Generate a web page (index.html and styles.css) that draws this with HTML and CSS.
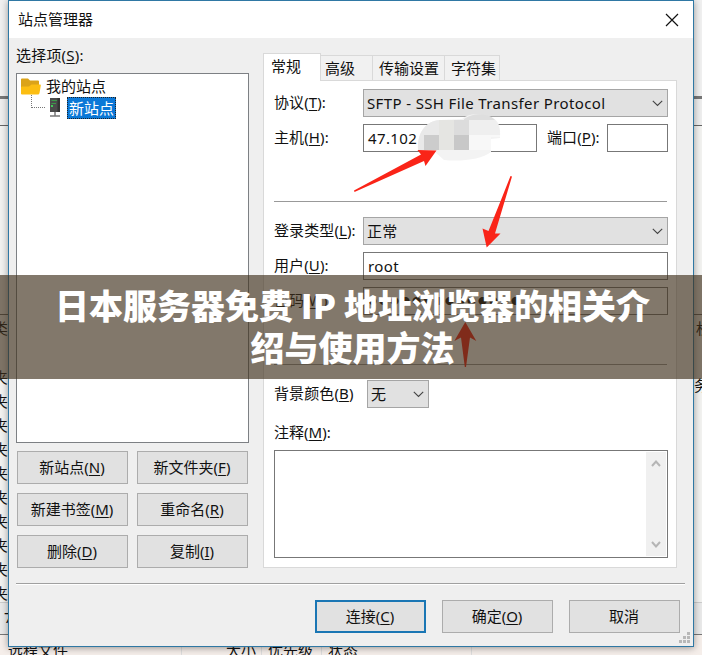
FILE: index.html
```html
<!DOCTYPE html>
<html lang="zh-CN">
<head>
<meta charset="utf-8">
<title>站点管理器</title>
<link rel="stylesheet" href="styles.css">
</head>
<body>
<div class="screen">
  <div class="backdrop">
    <div class="toolbar-edge"></div>
    <div class="address-row"></div>
    <div class="tree-pane"></div>
    <div class="list-head"><span class="clip-left">类</span><span class="clip-right">权</span></div>
    <div class="list-body">
      <div class="list-col"><span>夹</span><span>夹</span><span>夹</span><span>夹</span><span>夹</span><span>夹</span><span>夹</span><span>夹</span><span>夹</span><span>夹</span></div>
      <span class="owner">务</span>
    </div>
    <div class="status-row"><span>7</span></div>
    <div class="queue-head">
      <span class="q-file">远程文件</span><span class="q-size">大小</span><span class="q-prio">优先级</span><span class="q-state">状态</span>
    </div>
  </div>

  <div class="dialog">
    <div class="titlebar">
      <span>站点管理器</span>
      <svg class="close" width="14" height="14" viewBox="0 0 14 14"><path d="M1 1 13 13M13 1 1 13"/></svg>
    </div>
    <div class="content">
      <div class="left">
        <div class="select-label">选择项(<u>S</u>):</div>
        <div class="tree">
          <div class="tree-root">
            <svg width="20" height="17" viewBox="0 0 20 17"><path fill="#dba319" d="M0 1.500Q0 .5 1 .5H7L9 2.500H17Q18 2.500 18 3.500V16H1Q0 16 0 15Z"/><path fill="#fcbe12" d="M0 15.500V9.500Q0 8.500 1 8.500H8L10.500 6.500H19Q20 6.500 19.800 7.500L18.500 15Q18.200 16.500 17 16.500H1Q0 16.500 0 15.500Z"/></svg>
            <span>我的站点</span>
          </div>
          <div class="tree-child">
            <span class="branch"></span>
            <svg width="12" height="20" viewBox="0 0 12 20"><path fill="#4b4b4b" d="M1 0H11V14H1Z"/><path fill="#333" d="M8.500 0H11V14H8.500Z"/><path stroke="#3c9a4a" d="M2.500 2.500H8M2.500 5.500H7"/><path fill="#43c95a" d="M2 7H4V9H2Z"/><path stroke="#777" stroke-width="1.500" d="M6 14V18M1 18H11"/></svg>
            <span class="selected">新站点</span>
          </div>
        </div>
        <div class="site-buttons">
          <button>新站点(<u>N</u>)</button><button>新文件夹(<u>F</u>)</button>
          <button>新建书签(<u>M</u>)</button><button>重命名(<u>R</u>)</button>
          <button>删除(<u>D</u>)</button><button>复制(<u>I</u>)</button>
        </div>
      </div>
      <div class="right">
        <div class="tabs"><span class="tab active">常规</span><span class="tab t2">高级</span><span class="tab t3">传输设置</span><span class="tab t4">字符集</span></div>
        <div class="panel">
          <div class="row"><label>协议(<u>T</u>):</label><div class="field combo"><span class="protocol">SFTP - SSH File Transfer Protocol</span><svg class="chev" width="11" height="7" viewBox="0 0 11 7"><path d="M.8.800 5.500 5.500 10.200.800"/></svg></div></div>
          <div class="row"><label>主机(<u>H</u>):</label><div class="field host">47.102</div><label class="port-label">端口(<u>P</u>):</label><div class="field port"></div></div>
          <div class="rule"></div>
          <div class="row"><label>登录类型(<u>L</u>):</label><div class="field combo"><span>正常</span><svg class="chev" width="11" height="7" viewBox="0 0 11 7"><path d="M.8.800 5.500 5.500 10.200.800"/></svg></div></div>
          <div class="row"><label>用户(<u>U</u>):</label><div class="field user">root</div></div>
          <div class="row"><label>密码(<u>W</u>):</label><div class="field password">●●●●●●●●●●●●●●</div></div>
          <div class="rule"></div>
          <div class="row colour"><label>背景颜色(<u>B</u>)</label><div class="field combo small"><span>无</span><svg class="chev" width="11" height="7" viewBox="0 0 11 7"><path d="M.8.800 5.500 5.500 10.200.800"/></svg></div></div>
          <div class="comment-label">注释(<u>M</u>):</div>
          <div class="comment"><div class="scroll">
            <svg width="10" height="7" viewBox="0 0 10 7"><path d="M1 6 5 1.500 9 6"/></svg>
            <svg width="10" height="7" viewBox="0 0 10 7"><path d="M1 1 5 5.500 9 1"/></svg>
          </div></div>
        </div>
      </div>
    </div>
    <div class="divider"></div>
    <div class="actions"><button class="default">连接(<u>C</u>)</button><button>确定(<u>O</u>)</button><button>取消</button></div>
    <svg class="grip" width="12" height="12" viewBox="0 0 12 12"><path fill="#b8b8b8" d="M8 0h3v3H8ZM4 4h3v3H4ZM8 4h3v3H8ZM0 8h3v3H0ZM4 8h3v3H4ZM8 8h3v3H8Z"/></svg>
  </div>

  <svg class="marks" width="702" height="655" viewBox="0 0 702 655">
    <path fill="#f3f3f3" d="M418 150C417 132 426 121 440 120L462 119C468 113 480 113 490 117C498 119 501 126 500 138L491 139V152C482 159 462 162 444 160L434 151Z"/>
    <path fill="#e9e9e9" d="M418 150C417 132 426 121 440 120V150Z"/>
    <path fill="#dedede" d="M464 119C473 112 489 113 495 120H464Z"/>
    <path fill="#efefef" d="M469 120H495Q500 125 500 135H469Z"/>
    <path fill="#f8f8f8" d="M469 135H500V137H491V150H469Z"/>
    <path fill="#ccc" d="M424 135h15v15H424Z"/><path fill="#e5e5e2" d="M439 120h15v30H439Z"/><path fill="#dcdcdc" d="M454 120h15v15H454Z"/><path fill="#c8c8c8" d="M454 135h15v15H454Z"/>
    <g fill="#fa2418"><path d="M354 190.500 421 154.500 417.500 150 436.500 150.500 425.500 166 424 161 354.500 192Z"/><path d="M510.500 176 512 176.500 505 200 495 233.500 500.500 233.500 486.700 247.500 482.500 228.500 488.500 231 501 200Z"/><path d="M465.300 322 476.300 341 470 337.500 466 367H464.800L461 337.500 454.300 341Z"/></g>
  </svg>

  <div class="banner">日本服务器免费 IP 地址浏览器的相关介绍与使用方法</div>
</div>
</body>
</html>
```
FILE: styles.css
```css
* { box-sizing: border-box; }
body { margin: 0; font: 15px/20px "Noto Sans", "Noto Sans CJK SC", sans-serif; color: #111; }
u { text-underline-offset: 2px; text-decoration-thickness: 1px; }
svg { display: block; flex: none; }
.screen { position: relative; width: 702px; height: 655px; overflow: hidden; }

.backdrop { height: 655px; display: flex; flex-direction: column; background: #f2f2f0; overflow: hidden; }
.backdrop > div { flex: none; }
.toolbar-edge { height: 99px; background: #f0f0f0; border-bottom: 3px solid #777; }
.address-row { height: 27px; border-bottom: 1px solid #666; background: #eee; }
.tree-pane { height: 189px; border-bottom: 1px solid #666; }
.list-head { height: 52px; padding-top: 3px; display: flex; justify-content: space-between; }
.clip-left { margin-left: -7px; }
.clip-right { margin-right: -9px; }
.list-body { height: 235px; display: flex; justify-content: space-between; overflow: hidden; }
.list-col { display: flex; flex-direction: column; margin-left: -7px; margin-top: -2px; }
.list-col span { height: 24px; line-height: 24px; }
.owner { margin: 8px -7px 0 0; }
.status-row { height: 33px; padding: 4px 0 0 4px; background: #e9e9e9; border-top: 1px solid #ccc; border-bottom: 1px solid #777; }
.queue-head { height: 30px; padding-top: 5px; display: flex; background: #f5eeea; }
.queue-head span { border-right: 1px solid #ddd; height: 20px; flex: none; }
.q-file { width: 182px; padding-left: 8px; }
.q-size { width: 80px; padding-left: 44px; }
.q-prio { width: 60px; padding-left: 6px; }
.q-state { width: 150px; padding-left: 6px; }

.dialog { position: absolute; left: 8px; top: 0; width: 686px; height: 647px; border: 1px solid #2f78a4; background: #efefef; box-shadow: 0 1px 7px rgba(0,0,0,.38); }
.titlebar { height: 37px; background: #fff; display: flex; justify-content: space-between; align-items: center; padding: 0 14px 0 9px; }
.titlebar span { padding-bottom: 2px; }
.close path { fill: none; stroke: #111; stroke-width: 1.2; }
.content { display: flex; height: 545px; padding-left: 7px; }
.left { width: 233px; padding-top: 7px; }
.select-label { height: 28px; letter-spacing: .2px; }
.tree { height: 370px; border: 1px solid #7d8084; background: #fff; padding: 3px 4px; }
.tree-root { display: flex; height: 19px; align-items: center; gap: 5px; }
.tree-root span { padding-bottom: 2px; }
.tree-child { display: flex; align-items: center; padding-left: 10px; height: 23px; }
.branch { width: 14px; height: 13px; border-left: 1px dotted #777; border-bottom: 1px dotted #777; margin: -12px 4px 0 0; }
.selected { margin-left: 6px; width: 49px; height: 22px; line-height: 20px; padding: 0 1px; border: 1px dotted #222; background: #0b78d7; color: #fff; }
button { font: inherit; color: #111; background: #e1e1e1; border: 1px solid #acacac; padding: 0 1px 2px 0; height: 33px; width: 111px; }
.site-buttons { display: grid; grid-template-columns: 111px 111px; gap: 9px; padding: 8px 0 0 1px; }
.right { margin-left: 14px; width: 414px; padding-top: 15px; }
.tabs { display: flex; height: 27px; align-items: flex-end; }
.tab { height: 25px; line-height: 25px; border: 1px solid #d9d9d9; border-left: 0; border-bottom: 0; background: #f1f1f1; }
.tab.active { height: 28px; width: 58px; padding-left: 7px; line-height: 24px; background: #fff; border-left: 1px solid #d9d9d9; margin-bottom: -1px; position: relative; }
.t2 { width: 52px; padding-left: 4px; }
.t3 { width: 72px; padding-left: 6px; }
.t4 { width: 55px; padding-left: 6px; }
.panel { height: 488px; background: #fff; border: 1px solid #d9d9d9; padding: 8px 8px 0 10px; }
.row { display: flex; height: 28px; margin-bottom: 7px; align-items: center; }
.row label { width: 89px; white-space: nowrap; padding-bottom: 2px; letter-spacing: .1px; }
.field { height: 28px; flex: 1; border: 1px solid #777; padding: 0 4px; line-height: 26px; background: #fff; letter-spacing: .37px; }
.combo { display: flex; justify-content: space-between; align-items: center; background: #e1e1e1; border-color: #a5a5a5; padding: 0 4px 0 3px; }
.chev path { fill: none; stroke: #444; stroke-width: 1.1; }
.field.host { flex: none; width: 174px; }
.row .port-label { width: 60px; margin-left: 10px; }
.field.port { flex: none; width: 61px; }
.rule { height: 1px; margin: 49px 1px 15px 0; background: #999; }
.field.password { font-size: 9px; letter-spacing: 2px; }
.row.colour label { width: 93px; }
.field.small { flex: none; width: 62px; }
.comment-label { height: 28px; padding-top: 7px; }
.comment { margin-top: 7px; height: 108px; border: 1px solid #777; display: flex; justify-content: flex-end; padding: 1px; }
.scroll { width: 20px; background: #f0f0f0; padding: 8px 0; display: flex; flex-direction: column; justify-content: space-between; align-items: center; }
.scroll path { fill: none; stroke: #b5b5b5; stroke-width: 2; }
.divider { height: 2px; margin: 0 8px 0 7px; background: #fff; border-top: 1px solid #a0a0a0; }
.actions { display: flex; justify-content: flex-end; gap: 16px; padding: 15px 13px 0 0; }
.default { border: 2px solid #1a76b4; }
.grip { position: absolute; right: 2px; bottom: 2px; }

.marks { position: absolute; left: 0; top: 0; }
.banner { position: absolute; left: 0; top: 275px; width: 702px; height: 104px; padding: 9px 51px 0 54px; background: rgba(63,48,28,.65); color: #fff; font: 900 34px/42px "Noto Sans CJK SC", sans-serif; text-align: center; }
```
